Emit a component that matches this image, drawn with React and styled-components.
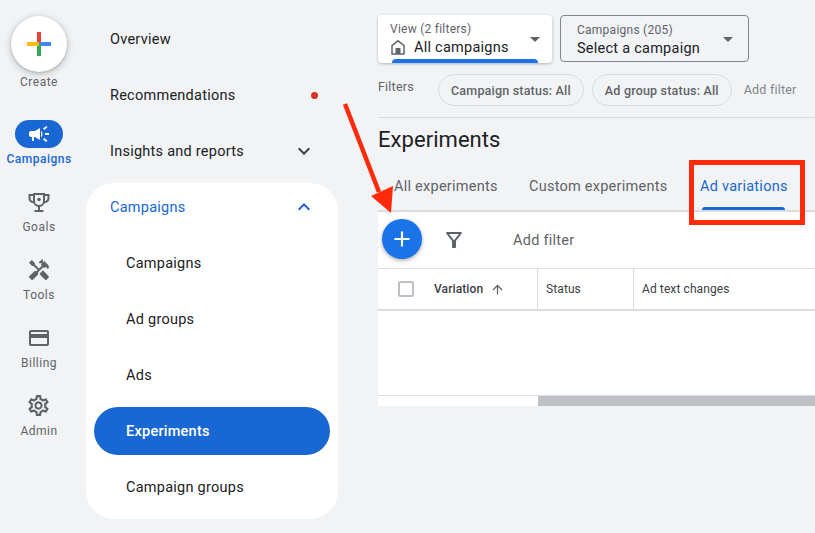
import React from 'react'
import styled, { createGlobalStyle } from 'styled-components'
import {
  MdAdd,
  MdArrowDropDown,
  MdArrowUpward,
  MdCampaign,
  MdExpandLess,
  MdExpandMore,
  MdHandyman,
  MdOutlineCreditCard,
  MdOutlineFilterAlt,
  MdOutlineSettings,
} from 'react-icons/md'

const GlobalStyle = createGlobalStyle`
  html, body {
    margin: 0;
    padding: 0;
    background: #f1f3f5;
    overflow: hidden;
  }
  * {
    box-sizing: border-box;
  }
`

const TrophyIcon = () => (
  <svg width="24" height="24" viewBox="0 0 24 24" fill="none">
    <path d="M7 4h10v7a5 5 0 0 1-10 0V4Z" stroke="#5f6368" strokeWidth="2" />
    <path d="M7 5H2.500v3c0 2.400 1.800 4 4.500 4.200M17 5h4.500v3c0 2.400-1.800 4-4.500 4.200" stroke="#5f6368" strokeWidth="2" />
    <circle cx="12" cy="9.500" r="1.800" fill="#5f6368" />
    <path d="M12 16v4M7.500 21h9" stroke="#5f6368" strokeWidth="2" />
  </svg>
)

const GooglePlus = () => (
  <svg width="24" height="24" viewBox="0 0 24 24">
    <rect x="10" y="0" width="4" height="12" fill="#ea4335" />
    <rect x="12" y="10" width="12" height="4" fill="#4285f4" />
    <rect x="10" y="12" width="4" height="12" fill="#34a853" />
    <rect x="0" y="10" width="12" height="4" fill="#fbbc04" />
  </svg>
)

const HomeIcon = () => (
  <svg width="16" height="16" viewBox="0 0 16 16" fill="none">
    <path d="M2 6.500 8 1.800l6 4.700V15H2V6.500Z" stroke="#5f6368" strokeWidth="1.500" />
    <rect x="5.500" y="9" width="5" height="6" fill="#5f6368" />
  </svg>
)

const railItems = [
  { label: 'Goals', icon: <TrophyIcon /> },
  { label: 'Tools', icon: <MdHandyman size={24} color="#5f6368" /> },
  { label: 'Billing', icon: <MdOutlineCreditCard size={24} color="#5f6368" /> },
  { label: 'Admin', icon: <MdOutlineSettings size={25} color="#5f6368" /> },
]

const subItems = ['Campaigns', 'Ad groups', 'Ads', 'Experiments', 'Campaign groups']

export default function App() {
  return (
    <Page>
      <GlobalStyle />
      <Rail>
        <CreateButton>
          <GooglePlus />
        </CreateButton>
        <RailLabel>Create</RailLabel>
        <CampaignsPill>
          <MdCampaign size={24} color="#fff" />
        </CampaignsPill>
        <RailLabel $active>Campaigns</RailLabel>
        {railItems.map((item) => (
          <RailItem key={item.label}>
            <RailIcon>{item.icon}</RailIcon>
            <RailLabel>{item.label}</RailLabel>
          </RailItem>
        ))}
      </Rail>

      <Nav>
        <NavRow>Overview</NavRow>
        <NavRow>
          Recommendations
          <RedDot />
        </NavRow>
        <NavRow>
          Insights and reports
          <MdExpandMore size={24} color="#3c4043" />
        </NavRow>
        <NavCard>
          <CardHeader>
            Campaigns
            <MdExpandLess size={24} color="#1967d2" />
          </CardHeader>
          {subItems.map((name) => (
            <SubRow key={name} $selected={name === 'Experiments'}>
              {name}
            </SubRow>
          ))}
        </NavCard>
      </Nav>

      <Main>
        <Pickers>
          <ViewPicker>
            <PickerText>
              <PickerLabel>View (2 filters)</PickerLabel>
              <PickerValue>
                <HomeIcon />
                All campaigns
              </PickerValue>
            </PickerText>
            <MdArrowDropDown size={24} color="#5f6368" />
            <ViewBar />
          </ViewPicker>
          <CampaignPicker>
            <PickerText>
              <PickerLabel>Campaigns (205)</PickerLabel>
              <PickerValue>Select a campaign</PickerValue>
            </PickerText>
            <MdArrowDropDown size={24} color="#5f6368" />
          </CampaignPicker>
        </Pickers>

        <FilterRow>
          <FiltersLabel>Filters</FiltersLabel>
          <Chip>Campaign status: All</Chip>
          <Chip>Ad group status: All</Chip>
          <AddFilterHint>Add filter</AddFilterHint>
        </FilterRow>

        <Title>Experiments</Title>

        <Tabs>
          <Tab $width={135}>All experiments</Tab>
          <Tab $width={171}>Custom experiments</Tab>
          <Tab $width={87} $active>
            Ad variations
          </Tab>
        </Tabs>

        <Panel>
          <Toolbar>
            <Fab>
              <MdAdd size={26} color="#fff" />
            </Fab>
            <FunnelSlot>
              <MdOutlineFilterAlt size={24} color="#5f6368" />
            </FunnelSlot>
            <ToolbarFilter>Add filter</ToolbarFilter>
          </Toolbar>
          <TableHead>
            <VariationCell>
              <Checkbox />
              Variation
              <MdArrowUpward size={15} color="#5f6368" />
            </VariationCell>
            <StatusCell>Status</StatusCell>
            <ChangesCell>Ad text changes</ChangesCell>
          </TableHead>
          <TableBody />
          <ScrollTrack>
            <ScrollThumb />
          </ScrollTrack>
        </Panel>
      </Main>

      <Annotation width="815" height="533" viewBox="0 0 815 533">
        <path d="M345 104 379 192" stroke="#ff2a0a" strokeWidth="4.500" fill="none" />
        <path d="M391 213 371 196 393 186Z" fill="#ff2a0a" />
      </Annotation>
      <Highlight />
    </Page>
  )
}

const Page = styled.div`
  position: relative;
  display: flex;
  width: 815px;
  height: 533px;
  overflow: hidden;
  background: #f1f3f5;
  font-family: Roboto, "Liberation Sans", sans-serif;
`

const Rail = styled.div`
  width: 78px;
  flex: none;
  display: flex;
  flex-direction: column;
  align-items: center;
  padding-top: 16px;
`

const CreateButton = styled.div`
  width: 56px;
  height: 56px;
  border-radius: 50%;
  background: #fff;
  display: flex;
  align-items: center;
  justify-content: center;
  box-shadow: 0 1px 3px rgba(60, 64, 67, 0.3), 0 2px 6px 2px rgba(60, 64, 67, 0.15);
`

const RailLabel = styled.div`
  margin-top: 2px;
  height: 16px;
  line-height: 16px;
  font-size: 12px;
  letter-spacing: 0.5px;
  font-weight: ${(p) => (p.$active ? 500 : 400)};
  color: ${(p) => (p.$active ? '#1967d2' : '#5f6368')};
`

const CampaignsPill = styled.div`
  margin-top: 30px;
  margin-bottom: 1px;
  width: 48px;
  height: 28px;
  border-radius: 14px;
  background: #1967d2;
  display: flex;
  align-items: center;
  justify-content: center;
`

const RailItem = styled.div`
  margin-top: 22px;
  height: 46px;
  display: flex;
  flex-direction: column;
  align-items: center;
`

const RailIcon = styled.div`
  height: 25px;
  margin-bottom: 3px;
  display: flex;
  align-items: center;
  justify-content: center;
`

const Nav = styled.div`
  width: 260px;
  flex: none;
  margin-left: 8px;
  padding-top: 11px;
`

const NavRow = styled.div`
  height: 56px;
  padding: 0 30px 0 24px;
  display: flex;
  align-items: center;
  justify-content: space-between;
  font-size: 14.5px;
  letter-spacing: 0.25px;
  color: #202124;
`

const RedDot = styled.span`
  width: 7px;
  height: 7px;
  margin-right: -2px;
  border-radius: 50%;
  background: #d93025;
`

const NavCard = styled.div`
  width: 252px;
  height: 336px;
  margin-top: 4px;
  border-radius: 28px;
  background: #fff;
`

const CardHeader = styled.div`
  height: 48px;
  margin-bottom: 4px;
  padding: 0 22px 0 24px;
  display: flex;
  align-items: center;
  justify-content: space-between;
  font-size: 14.5px;
  letter-spacing: 0.25px;
  color: #1967d2;
`

const SubRow = styled.div`
  height: ${(p) => (p.$selected ? '48px' : '56px')};
  margin: ${(p) => (p.$selected ? '4px 8px' : '0 8px')};
  padding-left: 32px;
  border-radius: 24px;
  display: flex;
  align-items: center;
  font-size: 14.5px;
  letter-spacing: 0.25px;
  font-weight: ${(p) => (p.$selected ? 500 : 400)};
  color: ${(p) => (p.$selected ? '#fff' : '#202124')};
  background: ${(p) => (p.$selected ? '#1967d2' : 'transparent')};
`

const Main = styled.div`
  flex: 1;
  margin-left: 32px;
  padding-top: 15px;
  min-width: 0;
`

const Pickers = styled.div`
  display: flex;
  gap: 8px;
`

const ViewPicker = styled.div`
  position: relative;
  width: 174px;
  height: 48px;
  padding: 7px 5px 0 12px;
  display: flex;
  justify-content: space-between;
  background: #fff;
  border-radius: 4px;
  overflow: hidden;
  box-shadow: 0 1px 3px rgba(60, 64, 67, 0.35);
  > svg {
    margin-top: 5px;
  }
`

const ViewBar = styled.div`
  position: absolute;
  left: 14px;
  bottom: 0;
  width: 146px;
  height: 4px;
  border-radius: 4px 4px 0 0;
  background: #1a73e8;
`

const CampaignPicker = styled.div`
  width: 189px;
  height: 47px;
  padding: 7px 8px 0 16px;
  display: flex;
  justify-content: space-between;
  border: 1px solid #80868b;
  border-radius: 4px;
  > svg {
    margin-top: 4px;
  }
`

const PickerText = styled.div`
  display: flex;
  flex-direction: column;
`

const PickerLabel = styled.div`
  height: 15px;
  line-height: 15px;
  font-size: 12px;
  letter-spacing: 0.25px;
  color: #5f6368;
`

const PickerValue = styled.div`
  display: flex;
  align-items: center;
  gap: 8px;
  margin-top: 1px;
  height: 18px;
  font-size: 14.5px;
  letter-spacing: 0.25px;
  color: #202124;
`

const FilterRow = styled.div`
  margin-top: 11px;
  height: 44px;
  display: flex;
  align-items: flex-start;
  border-bottom: 1px solid #dadce0;
`

const FiltersLabel = styled.div`
  width: 60px;
  line-height: 26px;
  font-size: 12.5px;
  letter-spacing: 0.2px;
  color: #5f6368;
`

const Chip = styled.div`
  height: 32px;
  padding: 0 12px;
  margin-right: 8px;
  display: flex;
  align-items: center;
  border: 1px solid #dadce0;
  border-radius: 16px;
  font-size: 12.5px;
  font-weight: 500;
  letter-spacing: 0.2px;
  color: #5f6368;
`

const AddFilterHint = styled.div`
  margin-left: 4px;
  line-height: 32px;
  font-size: 12.5px;
  letter-spacing: 0.2px;
  color: #80868b;
`

const Title = styled.h1`
  margin: 0;
  height: 44px;
  padding-top: 9px;
  font-size: 22px;
  line-height: 26px;
  font-weight: 400;
  letter-spacing: 0.05px;
  color: #202124;
`

const Tabs = styled.div`
  height: 50px;
  padding: 15px 0 0 16px;
  display: flex;
  border-bottom: 2px solid #dadce0;
`

const Tab = styled.div`
  position: relative;
  width: ${(p) => p.$width}px;
  flex: none;
  font-size: 14.5px;
  letter-spacing: 0.25px;
  line-height: 20px;
  white-space: nowrap;
  color: ${(p) => (p.$active ? '#1967d2' : '#5f6368')};
  ${(p) =>
    p.$active &&
    `
    &::after {
      content: "";
      position: absolute;
      left: 2px;
      bottom: 0;
      width: 83px;
      height: 3px;
      border-radius: 3px 3px 0 0;
      background: #1967d2;
    }
  `}
`

const Panel = styled.div`
  background: #fff;
`

const Toolbar = styled.div`
  height: 56px;
  padding: 7px 0 0 4px;
  display: flex;
  align-items: flex-start;
`

const Fab = styled.div`
  width: 40px;
  height: 40px;
  border-radius: 50%;
  background: #1a73e8;
  display: flex;
  align-items: center;
  justify-content: center;
  box-shadow: 0 1px 3px rgba(60, 64, 67, 0.3), 0 2px 5px 1px rgba(60, 64, 67, 0.15);
`

const FunnelSlot = styled.div`
  width: 24px;
  margin: 1px 0 0 20px;
  height: 40px;
  display: flex;
  align-items: center;
`

const ToolbarFilter = styled.div`
  margin: 2px 0 0 47px;
  line-height: 40px;
  font-size: 14.5px;
  letter-spacing: 0.25px;
  color: #5f6368;
`

const TableHead = styled.div`
  height: 43px;
  display: grid;
  grid-template-columns: 160px 96px 1fr;
  border-top: 1px solid #dadce0;
  border-bottom: 2px solid #dadce0;
  font-size: 12px;
  color: #3c4043;
`

const VariationCell = styled.div`
  display: flex;
  align-items: center;
  padding-left: 20px;
  border-right: 1px solid #dadce0;
  font-weight: 500;
  letter-spacing: 0.1px;
  svg {
    margin-left: 7px;
  }
`

const Checkbox = styled.span`
  width: 16px;
  height: 16px;
  margin-right: 20px;
  border: 2px solid #bdc1c6;
  border-radius: 2px;
`

const StatusCell = styled.div`
  display: flex;
  align-items: center;
  padding-left: 8px;
  border-right: 1px solid #dadce0;
  letter-spacing: 0.1px;
`

const ChangesCell = styled.div`
  display: flex;
  align-items: center;
  padding-left: 8px;
  letter-spacing: 0.1px;
`

const TableBody = styled.div`
  height: 85px;
  border-bottom: 1px solid #dadce0;
`

const ScrollTrack = styled.div`
  height: 10px;
  padding-left: 160px;
`

const ScrollThumb = styled.div`
  height: 100%;
  background: #bdc1c6;
`

const Annotation = styled.svg`
  position: absolute;
  left: 0;
  top: 0;
  pointer-events: none;
`

const Highlight = styled.div`
  position: absolute;
  left: 689px;
  top: 160px;
  width: 116px;
  height: 65px;
  border: 5px solid #ff2a0a;
`
